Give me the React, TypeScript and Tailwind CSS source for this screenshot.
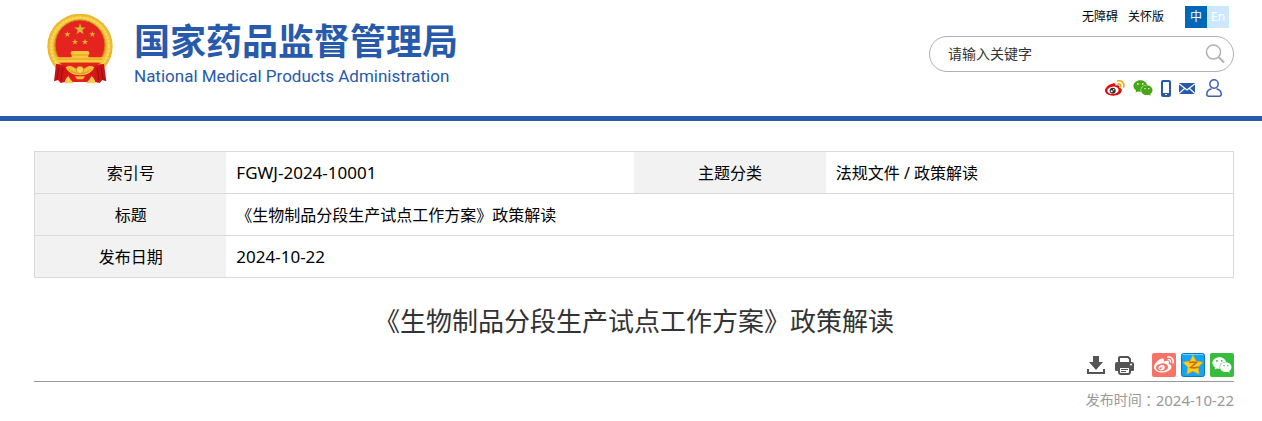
import { FaWeixin, FaWeibo } from "react-icons/fa";

const STAR = "M0-10 2.4-3.2 9.5-3.1 3.8 1.2 5.9 8.1 0 4 -5.9 8.1 -3.8 1.2 -9.5-3.1 -2.4-3.2Z";

const Emblem = () => (
  <svg viewBox="0 0 198 210" className="h-[70px] w-[66px] shrink-0" aria-hidden="true">
    <defs>
      <radialGradient id="gold" cx="50%" cy="50%" r="50%">
        <stop offset="74%" stopColor="#d99a1c" />
        <stop offset="86%" stopColor="#f9cf45" />
        <stop offset="100%" stopColor="#e8b02c" />
      </radialGradient>
      <linearGradient id="cloth" x1="0" y1="0" x2="1" y2="0">
        <stop offset="0%" stopColor="#c41014" />
        <stop offset="50%" stopColor="#e8201c" />
        <stop offset="100%" stopColor="#c41014" />
      </linearGradient>
    </defs>
    <circle cx="99" cy="97" r="98" fill="url(#gold)" />
    <circle cx="99" cy="97" r="87" fill="none" stroke="#fbdc6a" strokeWidth="5" strokeDasharray="6 5" />
    <circle cx="99" cy="93" r="75" fill="#e5231f" stroke="#c98c1b" strokeWidth="3" />
    <g fill="#dfb62f">
      <path d={STAR} transform="translate(99 46) scale(1.8)" />
      <path d={STAR} transform="translate(61 61) scale(.95)" />
      <path d={STAR} transform="translate(136 61) scale(.95)" />
      <path d={STAR} transform="translate(84 84) scale(.95)" />
      <path d={STAR} transform="translate(114 84) scale(.95)" />
    </g>
    <path d="M74 111h50l4 8-4 3v8h48l-8 16H34l-8-16h48v-8l-4-3Z" fill="#f7c83b" />
    <path d="M72 123h54M32 135h134" stroke="#d58a1e" strokeWidth="2" />
    <path d="M37 146h124l-24 20H61Z" fill="#e5231f" />
    <path d="M27 150c14 1 26 3 36 12h72c10-9 22-11 36-12l7 52-12-4-8 9-14-3H55l-14 3-8-9-12 4Z" fill="url(#cloth)" />
    <path d="M36 160 30 196M47 162l-5 38M162 160l6 36M151 162l5 38" stroke="#9a0b0e" strokeWidth="3" />
    <path d="M56 160c14-9 24 0 30 4 8-8 18-8 26 0 6-4 16-13 30-4-6 14-20 24-43 24s-37-10-43-24Z" fill="#f2c038" />
    <path d="M66 165c8 10 20 13 33 13s25-3 33-13" fill="none" stroke="#c98518" strokeWidth="2" />
    <circle cx="99" cy="168" r="11" fill="#f9d355" stroke="#bf7a13" strokeWidth="2" />
    <path d="M53 208c0-12 6-18 12-22 2 9 10 14 16 22ZM145 208c0-12-6-18-12-22-2 9-10 14-16 22Z" fill="#f5cd55" />
    <path d="M84 187h30l-6 9H90Z" fill="#f3bd30" />
  </svg>
);

const WeiboColor = () => (
  <svg viewBox="0 0 60 48" className="h-4 w-5" aria-hidden="true">
    <path
      d="M22 11c6-3 11-1 9 6 8-3 14-1 12 6 6 2 8 5 7 10-2 9-13 14-25 14C11 47 0 41 0 31c0-8 10-17 22-20Z"
      fill="#df0a0d"
    />
    <ellipse cx="24" cy="31" rx="17" ry="11" transform="rotate(-7 24 31)" fill="#fff" />
    <circle cx="23" cy="32" r="9" fill="#333" />
    <circle cx="20" cy="34" r="3" fill="#fff" />
    <circle cx="26" cy="29" r="2" fill="#fff" />
    <path d="M38 3c12-3 21 6 18 18M39 12c6-1 10 3 8 8" fill="none" stroke="#eeac11" strokeWidth="5" strokeLinecap="round" />
  </svg>
);

const PhoneIcon = () => (
  <svg viewBox="0 0 10 17" className="h-[17px] w-2.5" aria-hidden="true">
    <rect x="1" y="1" width="8" height="15" rx="1" fill="#fff" stroke="#285aac" strokeWidth="2" />
    <path d="M1 13h8v3H1Z" fill="#285aac" />
    <path d="M4 14h2v1H4Z" fill="#fff" />
  </svg>
);

const MailIcon = () => (
  <svg viewBox="0 0 16 11" className="h-[11px] w-4" aria-hidden="true">
    <path d="M0 0h16v11H0Z" fill="#285aac" />
    <path d="M0 .8 8 7l8-6.200M0 10.500l5.500-5M16 10.500l-5.500-5" fill="none" stroke="#fff" strokeWidth="1.200" />
  </svg>
);

const UserIcon = () => (
  <svg viewBox="0 0 16 18" className="h-[18px] w-4" fill="none" stroke="#3d5fae" strokeWidth="1.500" aria-hidden="true">
    <circle cx="8" cy="5" r="4.200" />
    <path d="M5.500 9.700C2.600 10.500.8 12.500.8 15.200c0 1.400.7 2 2 2h10.400c1.300 0 2-.6 2-2 0-2.700-1.800-4.700-4.700-5.500" />
  </svg>
);

const SearchIcon = () => (
  <svg viewBox="0 0 20 20" className="size-5" fill="none" stroke="#b0b0b0" strokeWidth="1.500" aria-hidden="true">
    <circle cx="8.500" cy="8" r="7" />
    <path d="m13.500 13 5.500 5.500" strokeWidth="2" />
  </svg>
);

const DownloadIcon = () => (
  <svg viewBox="0 0 18 18" className="size-[18px]" aria-hidden="true">
    <path d="M6 0h6v6h4l-7 8L2 6h4Z" fill="#555" />
    <path d="M1 13v4h16v-4" fill="none" stroke="#555" strokeWidth="2" />
  </svg>
);

const PrintIcon = () => (
  <svg viewBox="0 0 19 19" className="size-[19px]" aria-hidden="true">
    <path d="M4 6V2q0-1 1-1h8l2 2v3" fill="#fff" stroke="#555" strokeWidth="2" />
    <path d="M2 6h15q2 0 2 2v6q0 1-1 1H1q-1 0-1-1V8q0-2 2-2Z" fill="#555" />
    <path d="M4 11h11v5q0 2-2 2H6q-2 0-2-2Z" fill="#fff" stroke="#555" strokeWidth="2" />
    <path d="M6 13.500h7M6 15.500h5" stroke="#555" />
    <circle cx="16" cy="8.500" r="1" fill="#fff" />
  </svg>
);

const QzoneIcon = () => (
  <svg viewBox="0 0 24 24" className="size-6" aria-hidden="true">
    <rect x=".5" y=".5" width="23" height="23" rx="2" fill="#12a5f5" stroke="#0876c8" />
    <path d="M2 1.500h20" stroke="#7bd0ff" />
    <path
      d="m12 2 3 6.300 7 1-5 5 1.200 7L12 18l-6.200 3.300L7 14.300l-5-5 7-1Z"
      fill="#ffcf1f"
      stroke="#f2a80b"
      strokeWidth=".7"
    />
    <path d="M8 9.500q4-.7 7.500 0L9.500 14.500q4 1 7.500-.5" fill="none" stroke="#d46a08" strokeWidth="1.600" />
  </svg>
);

const Header = () => (
  <header className="flex h-[121px] justify-between border-b-5 border-[#285aac] pr-7 pl-[47px]">
    <a href="#" className="flex items-start gap-[21px] pt-3.5 text-[#285aac]">
      <Emblem />
      <span className="flex flex-col pt-1.5">
        <span className="text-[36px] leading-[44px] font-bold">国家药品监督管理局</span>
        <span className="font-['Roboto',sans-serif] text-[17px] leading-6">
          National Medical Products Administration
        </span>
      </span>
    </a>

    <div className="flex w-[305px] flex-col pt-1.5">
      <div className="flex items-center justify-end pr-[5px] text-xs leading-[22px] text-black">
        <a href="#" className="mr-2.5">无障碍</a>
        <a href="#" className="mr-[21px]">关怀版</a>
        <a href="#" className="size-[22px] bg-[#0068b7] text-center text-white">中</a>
        <a href="#" className="size-[22px] bg-[#cce8ff] text-center text-white">En</a>
      </div>

      <form className="mt-2 flex h-9 items-center rounded-full border border-[#b0b0b0] pr-2 pl-[18px]">
        <input
          type="text"
          aria-label="搜索"
          placeholder="请输入关键字"
          className="min-w-0 flex-1 text-sm text-[#333] outline-none placeholder:text-[#333]"
        />
        <button type="button" aria-label="搜索">
          <SearchIcon />
        </button>
      </form>

      <div className="mt-[7px] flex h-[18px] items-center justify-end pr-3">
        <a href="#" aria-label="微博" className="mr-2"><WeiboColor /></a>
        <a href="#" aria-label="微信" className="mr-2"><FaWeixin className="size-5 text-[#46a613]" /></a>
        <a href="#" aria-label="移动端" className="mr-2"><PhoneIcon /></a>
        <a href="#" aria-label="邮箱" className="mr-[11px]"><MailIcon /></a>
        <a href="#" aria-label="个人中心"><UserIcon /></a>
      </div>
    </div>
  </header>
);

const InfoTable = () => (
  <table className="w-full table-fixed border-collapse border border-[#d9d9d9] text-base text-black">
    <colgroup>
      <col className="w-[16%]" />
      <col className="w-[34%]" />
      <col className="w-[16%]" />
      <col className="w-[34%]" />
    </colgroup>
    <tbody>
      <tr className="h-[42px] border-b border-[#d9d9d9]">
        <th scope="row" className="bg-[#f2f2f2] font-normal">索引号</th>
        <td className="px-2.5 text-[17px]">FGWJ-2024-10001</td>
        <th scope="row" className="bg-[#f2f2f2] font-normal">主题分类</th>
        <td className="px-2.5">法规文件 / 政策解读</td>
      </tr>
      <tr className="h-[42px] border-b border-[#d9d9d9]">
        <th scope="row" className="bg-[#f2f2f2] font-normal">标题</th>
        <td colSpan={3} className="px-2.5">《生物制品分段生产试点工作方案》政策解读</td>
      </tr>
      <tr className="h-[42px]">
        <th scope="row" className="bg-[#f2f2f2] font-normal">发布日期</th>
        <td colSpan={3} className="px-2.5 text-[17px]">2024-10-22</td>
      </tr>
    </tbody>
  </table>
);

export default function App() {
  return (
    <div className="bg-white font-['Noto_Sans','Noto_Sans_CJK_SC',sans-serif]">
      <Header />

      <main className="pt-[30px] pr-7 pl-[34px]">
        <InfoTable />

        <h1 className="mt-[23px] text-center text-[26px] leading-10 text-[#333]">
          《生物制品分段生产试点工作方案》政策解读
        </h1>

        {/* Page tools and share links */}
        <div className="mt-3 flex h-[29px] items-start justify-end border-b border-[#999]">
          <div className="mr-[18px] flex h-6 items-center gap-2.5">
            <button type="button" aria-label="下载"><DownloadIcon /></button>
            <button type="button" aria-label="打印"><PrintIcon /></button>
          </div>
          <div className="flex gap-[5px]">
            <a href="#" aria-label="分享到微博" className="flex size-6 items-center justify-center rounded-xs bg-[#f67366]">
              <FaWeibo className="size-5 text-white" />
            </a>
            <a href="#" aria-label="分享到QQ空间"><QzoneIcon /></a>
            <a href="#" aria-label="分享到微信" className="flex size-6 items-center justify-center rounded-xs bg-[#35bd3b]">
              <FaWeixin className="size-5 text-white" />
            </a>
          </div>
        </div>

        <p className="flex justify-end pt-1.5 text-sm leading-6 text-[#999]">
          发布时间<span className="font-['Noto_Sans_CJK_TC',sans-serif]">：</span>
          <time dateTime="2024-10-22" className="text-[15px]">2024-10-22</time>
        </p>
      </main>
    </div>
  );
}
